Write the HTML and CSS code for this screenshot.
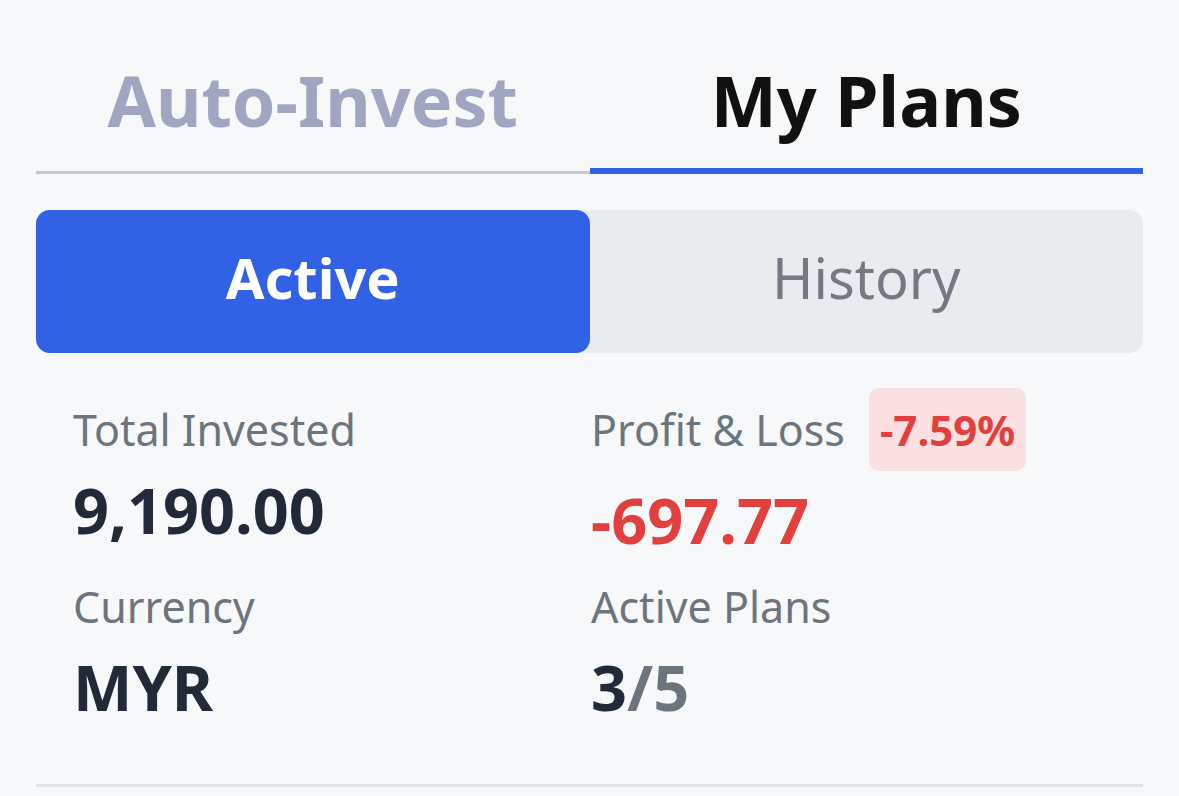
FILE: index.html
```html
<!DOCTYPE html>
<html>
<head>
    <title>My Plans</title>
    <meta name="viewport" content="width=device-width, initial-scale=1.0">
    <link rel="stylesheet" href="styles.css">
</head>
<body>
    <div class="page">
        <nav class="tabs">
            <div class="tab">Auto-Invest</div>
            <div class="tab active">My Plans</div>
        </nav>

        <div class="segment">
            <button class="seg-btn selected" type="button">Active</button>
            <button class="seg-btn" type="button">History</button>
        </div>

        <div class="stats">
            <div class="stat">
                <div class="stat-head">
                    <span class="label">Total Invested</span>
                </div>
                <div class="value">9,190.00</div>
            </div>
            <div class="stat">
                <div class="stat-head">
                    <span class="label">Profit &amp; Loss</span>
                    <span class="badge">-7.59%</span>
                </div>
                <div class="value loss">-697.77</div>
            </div>
            <div class="stat">
                <div class="stat-head">
                    <span class="label">Currency</span>
                </div>
                <div class="value">MYR</div>
            </div>
            <div class="stat">
                <div class="stat-head">
                    <span class="label">Active Plans</span>
                </div>
                <div class="value">3<span class="muted">/5</span></div>
            </div>
        </div>
    </div>
</body>
</html>
```

FILE: styles.css
```css
body{
  margin: 0;
  background-color: #f7f8fa;
  font-family: "Noto Sans", "Open Sans", sans-serif;
}
.page{
  padding: 52px 36px 0 36px;
}

/* top tabs */
.tabs{
  display: flex;
  align-items: flex-end;
}
.tab{
  flex: 1;
  text-align: center;
  font-size: 70px;
  font-weight: 700;
  line-height: 96px;
  color: #a0a6c1;
  padding-bottom: 23px;
  border-bottom: 3px solid #c6c8d0;
}
.tab.active{
  color: #111111;
  padding-bottom: 20px;
  border-bottom: 6px solid #3161e5;
}

/* active / history switch */
.segment{
  display: flex;
  margin-top: 36px;
  height: 143px;
  background-color: #e9ecef;
  border-radius: 14px;
}
.seg-btn{
  flex: 1;
  border: none;
  background: none;
  font-family: inherit;
  font-size: 56px;
  color: #737a83;
  border-radius: 14px;
  padding: 0 0 9px 0;
}
.seg-btn.selected{
  background-color: #3161e5;
  color: #fff;
  font-weight: 700;
}

/* numbers */
.stats{
  display: grid;
  grid-template-columns: 518px 1fr;
  row-gap: 16px;
  padding: 46px 0 57px 37px;
  border-bottom: 3px solid #e1e4e8;
}
.stat-head{
  display: flex;
  align-items: baseline;
  gap: 24px;
}
.label{
  font-size: 43px;
  line-height: 62px;
  color: #6c757e;
}
.badge{
  margin-top: -11px;
  padding: 13px 11px;
  border-radius: 10px;
  background-color: #fae0e1;
  color: #e1403f;
  font-size: 42px;
  font-weight: 700;
}
.value{
  margin-top: 9px;
  font-size: 63px;
  line-height: 80px;
  font-weight: 700;
  color: #222938;
}
.value.loss{
  color: #e1403f;
}
.muted{
  color: #6c757e;
}
```
